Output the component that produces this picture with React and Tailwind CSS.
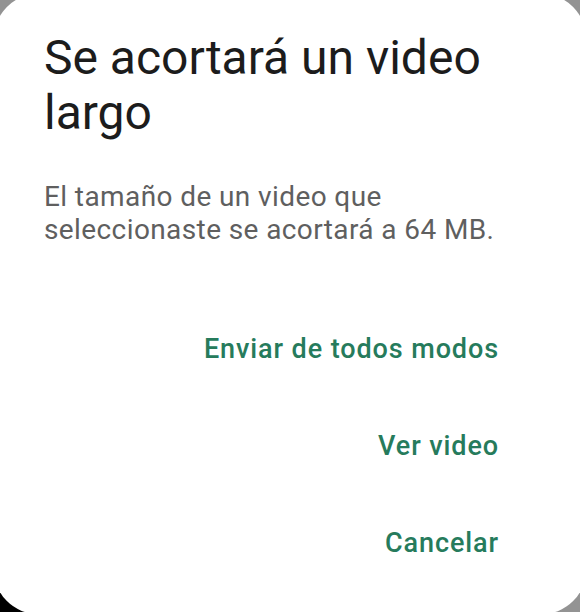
const actions = ["Enviar de todos modos", "Ver video", "Cancelar"];

export default function App() {
  return (
    <div className="relative h-[612px] w-[580px] overflow-hidden bg-[#939393] font-['Roboto',sans-serif]">
      <div className="absolute bottom-0 left-0 h-[50px] w-[60px] bg-black" />
      <div className="absolute right-0 bottom-[20px] h-[24px] w-[12px] bg-[#1a1a1a]" />
      <div className="relative -mx-[6px] -mt-[6px] flex h-[620px] flex-col rounded-[44px] bg-white pt-[36px] pr-[87px] pl-[50px]">
        <h1 className="text-[48px] leading-[55px] font-normal text-[#1c1c1c]">
          Se acortará un video largo
        </h1>
        <p className="mt-[40px] -mr-[20px] text-[28px] leading-[33px] tracking-[0.4px] text-[#5f5f5f]">
          El tamaño de un video que seleccionaste se acortará a 64 MB.
        </p>
        <div className="mt-[88px] flex flex-col items-end gap-[67px]">
          {actions.map((label) => (
            <button
              key={label}
              type="button"
              className="text-[27px] leading-[30px] font-medium tracking-[0.9px] text-[#267b5c]"
            >
              {label}
            </button>
          ))}
        </div>
      </div>
    </div>
  );
}
